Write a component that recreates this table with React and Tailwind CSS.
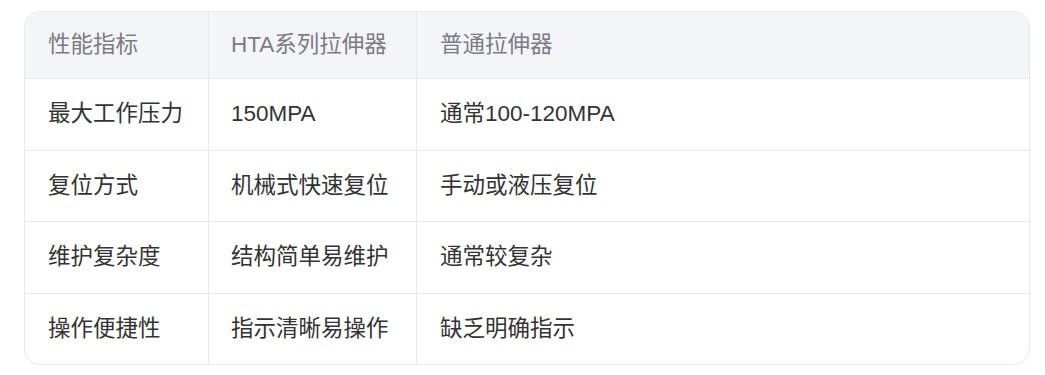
import React from "react";

const rows = [
  ["最大工作压力", "150MPA", "通常100-120MPA"],
  ["复位方式", "机械式快速复位", "手动或液压复位"],
  ["维护复杂度", "结构简单易维护", "通常较复杂"],
  ["操作便捷性", "指示清晰易操作", "缺乏明确指示"],
];

const App = () => {
  return (
    <div
      className="min-h-screen bg-white pl-[24px] pr-[15px] pt-[11px]"
      style={{ fontFamily: '"Liberation Sans", "Noto Sans CJK SC", sans-serif' }}
    >
      <div className="border border-[#e8e8ed] rounded-[16px] overflow-hidden text-[22.5px]">
        {/* header */}
        <div className="grid grid-cols-[184px_208px_1fr] h-[66px] bg-[#f4f5f9] text-[#7b7b83]">
          <div className="flex items-center pl-[23px] border-r border-[#e8e8ed]">性能指标</div>
          <div className="flex items-center pl-[22px] border-r border-[#e8e8ed]">HTA系列拉伸器</div>
          <div className="flex items-center pl-[23px]">普通拉伸器</div>
        </div>

        {/* body rows */}
        {rows.map((r, i) => (
          <div
            key={i}
            className="grid grid-cols-[184px_208px_1fr] h-[71.5px] border-t border-[#e8e8ed] text-[#333333]"
          >
            <div className="flex items-center pl-[23px] border-r border-[#e8e8ed]">{r[0]}</div>
            <div className="flex items-center pl-[22px] border-r border-[#e8e8ed]">{r[1]}</div>
            <div className="flex items-center pl-[23px]">{r[2]}</div>
          </div>
        ))}
      </div>
    </div>
  );
};

export default App;
